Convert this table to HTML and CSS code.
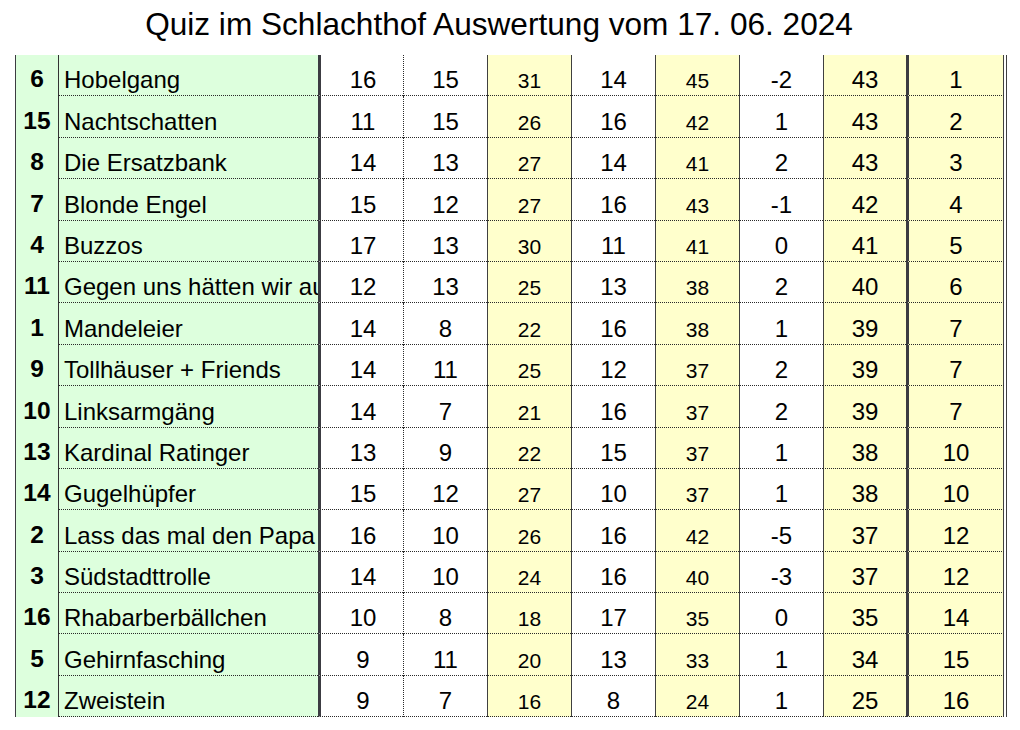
FILE: index.html
```html
<!DOCTYPE html>
<html lang="de">
<head>
<meta charset="utf-8">
<title>Quiz im Schlachthof Auswertung</title>
<link rel="stylesheet" href="styles.css">
</head>
<body>
<div class="sheet">
  <h1 class="title">Quiz im Schlachthof Auswertung vom 17. 06. 2024</h1>
  <div class="table">
    <div class="row"><div class="c rank">6</div><div class="c name">Hobelgang</div><div class="c n first">16</div><div class="c n dot">15</div><div class="c n y s">31</div><div class="c n">14</div><div class="c n y s">45</div><div class="c n">-2</div><div class="c n y">43</div><div class="c n y last">1</div></div>
    <div class="row"><div class="c rank">15</div><div class="c name">Nachtschatten</div><div class="c n first">11</div><div class="c n dot">15</div><div class="c n y s">26</div><div class="c n">16</div><div class="c n y s">42</div><div class="c n">1</div><div class="c n y">43</div><div class="c n y last">2</div></div>
    <div class="row"><div class="c rank">8</div><div class="c name">Die Ersatzbank</div><div class="c n first">14</div><div class="c n dot">13</div><div class="c n y s">27</div><div class="c n">14</div><div class="c n y s">41</div><div class="c n">2</div><div class="c n y">43</div><div class="c n y last">3</div></div>
    <div class="row"><div class="c rank">7</div><div class="c name">Blonde Engel</div><div class="c n first">15</div><div class="c n dot">12</div><div class="c n y s">27</div><div class="c n">16</div><div class="c n y s">43</div><div class="c n">-1</div><div class="c n y">42</div><div class="c n y last">4</div></div>
    <div class="row"><div class="c rank">4</div><div class="c name">Buzzos</div><div class="c n first">17</div><div class="c n dot">13</div><div class="c n y s">30</div><div class="c n">11</div><div class="c n y s">41</div><div class="c n">0</div><div class="c n y">41</div><div class="c n y last">5</div></div>
    <div class="row"><div class="c rank">11</div><div class="c name">Gegen uns hätten wir au</div><div class="c n first">12</div><div class="c n dot">13</div><div class="c n y s">25</div><div class="c n">13</div><div class="c n y s">38</div><div class="c n">2</div><div class="c n y">40</div><div class="c n y last">6</div></div>
    <div class="row"><div class="c rank">1</div><div class="c name">Mandeleier</div><div class="c n first">14</div><div class="c n dot">8</div><div class="c n y s">22</div><div class="c n">16</div><div class="c n y s">38</div><div class="c n">1</div><div class="c n y">39</div><div class="c n y last">7</div></div>
    <div class="row"><div class="c rank">9</div><div class="c name">Tollhäuser + Friends</div><div class="c n first">14</div><div class="c n dot">11</div><div class="c n y s">25</div><div class="c n">12</div><div class="c n y s">37</div><div class="c n">2</div><div class="c n y">39</div><div class="c n y last">7</div></div>
    <div class="row"><div class="c rank">10</div><div class="c name">Linksarmgäng</div><div class="c n first">14</div><div class="c n dot">7</div><div class="c n y s">21</div><div class="c n">16</div><div class="c n y s">37</div><div class="c n">2</div><div class="c n y">39</div><div class="c n y last">7</div></div>
    <div class="row"><div class="c rank">13</div><div class="c name">Kardinal Ratinger</div><div class="c n first">13</div><div class="c n dot">9</div><div class="c n y s">22</div><div class="c n">15</div><div class="c n y s">37</div><div class="c n">1</div><div class="c n y">38</div><div class="c n y last">10</div></div>
    <div class="row"><div class="c rank">14</div><div class="c name">Gugelhüpfer</div><div class="c n first">15</div><div class="c n dot">12</div><div class="c n y s">27</div><div class="c n">10</div><div class="c n y s">37</div><div class="c n">1</div><div class="c n y">38</div><div class="c n y last">10</div></div>
    <div class="row"><div class="c rank">2</div><div class="c name">Lass das mal den Papa</div><div class="c n first">16</div><div class="c n dot">10</div><div class="c n y s">26</div><div class="c n">16</div><div class="c n y s">42</div><div class="c n">-5</div><div class="c n y">37</div><div class="c n y last">12</div></div>
    <div class="row"><div class="c rank">3</div><div class="c name">Südstadttrolle</div><div class="c n first">14</div><div class="c n dot">10</div><div class="c n y s">24</div><div class="c n">16</div><div class="c n y s">40</div><div class="c n">-3</div><div class="c n y">37</div><div class="c n y last">12</div></div>
    <div class="row"><div class="c rank">16</div><div class="c name">Rhabarberbällchen</div><div class="c n first">10</div><div class="c n dot">8</div><div class="c n y s">18</div><div class="c n">17</div><div class="c n y s">35</div><div class="c n">0</div><div class="c n y">35</div><div class="c n y last">14</div></div>
    <div class="row"><div class="c rank">5</div><div class="c name">Gehirnfasching</div><div class="c n first">9</div><div class="c n dot">11</div><div class="c n y s">20</div><div class="c n">13</div><div class="c n y s">33</div><div class="c n">1</div><div class="c n y">34</div><div class="c n y last">15</div></div>
    <div class="row"><div class="c rank">12</div><div class="c name">Zweistein</div><div class="c n first">9</div><div class="c n dot">7</div><div class="c n y s">16</div><div class="c n">8</div><div class="c n y s">24</div><div class="c n">1</div><div class="c n y">25</div><div class="c n y last">16</div></div>
  </div>
</div>
</body>
</html>
```
FILE: styles.css
```css
html, body {
  margin: 0;
  padding: 0;
  background: #ffffff;
}

body {
  font-family: "Liberation Sans", Arial, sans-serif;
  color: #000000;
}

.sheet {
  width: 1020px;
  height: 730px;
  overflow: hidden;
}

.title {
  box-sizing: border-box;
  height: 55px;
  margin: 0;
  padding: 8px 22px 0 0;
  font-size: 31.6px;
  line-height: 32px;
  font-weight: normal;
  text-align: center;
  white-space: nowrap;
}

.table {
  display: inline-block;
  margin-left: 15px;
  padding-right: 2px;
  border-right: 1px solid #404040;
}

.row {
  display: grid;
  grid-template-columns: 43px 260px 85px 84px 84px 84px 84px 84px 83px 98px;
  height: 41.4px;
}

.c {
  box-sizing: border-box;
  display: flex;
  align-items: flex-end;
  border-left: 1px solid #404040;
  border-bottom: 1px dotted #2a2a2a;
  padding-bottom: 2px;
  font-size: 24px;
  line-height: 26px;
  white-space: nowrap;
  overflow: hidden;
}

.rank {
  justify-content: center;
  background: #ddffdd;
  border-left-color: #3c3c42;
  border-bottom: none;
  padding-bottom: 4px;
  font-size: 24.5px;
  font-weight: bold;
}

.name {
  background: #ddffdd;
  border-left-color: #333333;
  padding-left: 5px;
}

.n {
  justify-content: center;
  background: #ffffff;
}

.first {
  border-left: 3px solid #3c3c42;
  padding-left: 2px;
}

.dot {
  border-left: 1px dotted #2a2a2a;
}

.y {
  background: #ffffcc;
}

.s {
  font-size: 21px;
  padding-bottom: 1px;
}

.last {
  border-left: 3px solid #3c3c42;
  border-right: 1px solid #404040;
}
```
